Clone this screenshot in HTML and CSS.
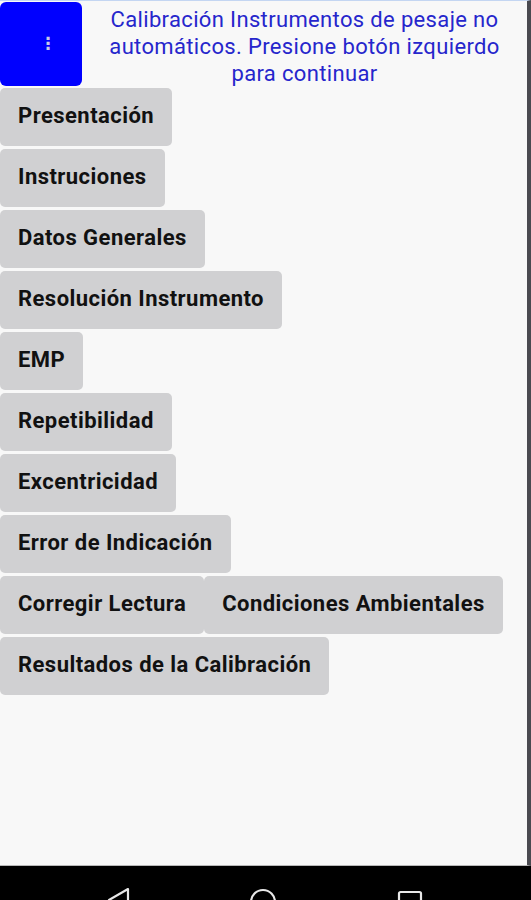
FILE: index.html
```html
<!DOCTYPE html>
<html lang="es">
<head>
<meta charset="utf-8">
<title>Calibración</title>
<link rel="stylesheet" href="styles.css">
</head>
<body>
<div class="screen">
  <div class="app">
    <header class="header">
      <button class="menu-btn"><span class="dots">⋮</span></button>
      <div class="title">Calibración Instrumentos de pesaje no automáticos. Presione botón izquierdo para continuar</div>
    </header>
    <main class="menu">
      <div class="row"><button class="btn">Presentación</button></div>
      <div class="row"><button class="btn">Instruciones</button></div>
      <div class="row"><button class="btn">Datos Generales</button></div>
      <div class="row"><button class="btn">Resolución Instrumento</button></div>
      <div class="row"><button class="btn">EMP</button></div>
      <div class="row"><button class="btn">Repetibilidad</button></div>
      <div class="row"><button class="btn">Excentricidad</button></div>
      <div class="row"><button class="btn">Error de Indicación</button></div>
      <div class="row"><button class="btn">Corregir Lectura</button><button class="btn">Condiciones Ambientales</button></div>
      <div class="row"><button class="btn">Resultados de la Calibración</button></div>
    </main>
  </div>
  <nav class="navbar">
    <svg class="nav-icon back" width="26" height="26" viewBox="0 0 26 26"><path d="M22 2 L3 13 L22 24 Z" fill="none" stroke="#e8e8e8" stroke-width="2.2" stroke-linejoin="round"/></svg>
    <svg class="nav-icon home" width="28" height="28" viewBox="0 0 28 28"><circle cx="14" cy="14" r="12" fill="none" stroke="#e8e8e8" stroke-width="2.2"/></svg>
    <svg class="nav-icon recent" width="26" height="26" viewBox="0 0 26 26"><rect x="2" y="2" width="22" height="22" rx="1.5" fill="none" stroke="#e8e8e8" stroke-width="2.2"/></svg>
  </nav>
</div>
</body>
</html>
```
FILE: styles.css
```css
html, body {
  margin: 0;
  padding: 0;
  background: #000;
}
.screen {
  width: 531px;
  height: 900px;
  overflow: hidden;
  display: flex;
  flex-direction: column;
}
.app {
  height: 866px;
  background: #f8f8f8;
  border-top: 1px solid #c4d6f2;
  border-right: 4px solid #4a4a50;
  border-bottom: 1px solid #b8b8b8;
  box-sizing: border-box;
  display: flex;
  flex-direction: column;
}
.header {
  display: flex;
  align-items: flex-start;
  padding-top: 1px;
}
.menu-btn {
  width: 82px;
  height: 84px;
  flex: none;
  border: none;
  margin: 0;
  padding: 0 0 2px 14px;
  background: #0000ff;
  border-radius: 6px;
  display: flex;
  align-items: center;
  justify-content: center;
}
.dots {
  color: #c8c8e8;
  font-family: "DejaVu Sans", sans-serif;
  font-size: 17px;
  font-weight: bold;
  line-height: 1;
}
.title {
  flex: 1;
  text-align: center;
  color: #2626cc;
  font-family: Roboto, "Liberation Sans", sans-serif;
  font-size: 22px;
  letter-spacing: 0.35px;
  line-height: 27px;
  padding: 4px 4px 0 4px;
}
.menu {
  display: flex;
  flex-direction: column;
  gap: 3px;
  margin-top: 1px;
}
.row {
  display: flex;
}
.btn {
  height: 58px;
  margin: 0;
  border: none;
  border-radius: 5px;
  background: #d0d0d2;
  color: #111;
  font-family: Roboto, "Liberation Sans", sans-serif;
  font-weight: bold;
  font-size: 22px;
  letter-spacing: 0.45px;
  padding: 0 18px 4px 18px;
  text-align: left;
  white-space: nowrap;
}
.navbar {
  flex: 1;
  background: #000;
  position: relative;
}
.nav-icon {
  position: absolute;
}
.back { left: 106px; top: 21px; }
.home { left: 249px; top: 22px; }
.recent { left: 397px; top: 24px; }
```
